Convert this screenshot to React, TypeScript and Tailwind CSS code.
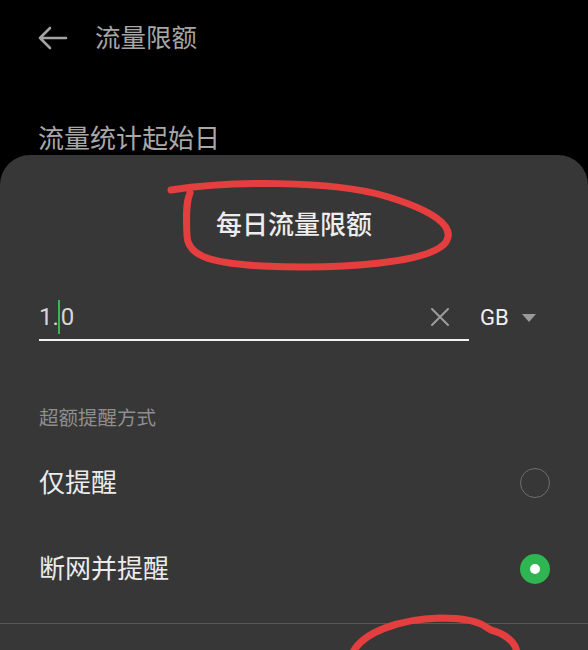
import React from 'react';

const font = { fontFamily: 'Roboto, "Noto Sans CJK SC", sans-serif' };

const Radio: React.FC<{ checked?: boolean }> = ({ checked }) =>
  checked ? (
    <div className="w-[30px] h-[30px] rounded-full bg-[#2fb551] flex items-center justify-center">
      <div className="w-[10px] h-[10px] rounded-full bg-white" />
    </div>
  ) : (
    <div className="w-[30px] h-[30px] rounded-full border-[1.5px] border-[#6e6e6e]" />
  );

// Red marker strokes drawn over the screenshot
const Annotations: React.FC = () => (
  <svg className="absolute inset-0 pointer-events-none" width="588" height="650" viewBox="0 0 588 650">
    <g fill="none" stroke="#e53e3e" strokeWidth="7" strokeLinecap="round" strokeLinejoin="round">
      <path d="M171 190 C 230 181 330 180 385 196 C 432 210 456 226 446 242 C 432 262 345 270 262 266 C 205 263 188 254 187 236 C 186 216 186 202 190 193" />
      <path d="M352 654 C 362 632 400 619 440 618 C 462 618 478 621 486 627 L 491 630 C 502 633 511 639 515 646 L 518 654" />
    </g>
  </svg>
);

export default function App() {
  return (
    <div className="relative w-[588px] h-[650px] bg-black overflow-hidden flex flex-col" style={font}>
      <div className="h-[76px] flex items-center pl-[38px] shrink-0">
        <svg width="30" height="24" viewBox="0 0 30 24" fill="none" stroke="#a3a3a3" strokeWidth="2.6" strokeLinecap="round" strokeLinejoin="round">
          <path d="M2 12 H28 M2 12 L12 2 M2 12 L12 22" />
        </svg>
        <span className="ml-[27px] text-[25.5px] leading-[32px] text-[#a6a6a6]">流量限额</span>
      </div>

      <div className="pt-[47px] pl-[38px] text-[26px] leading-[32px] text-[#a8a8a8] shrink-0">流量统计起始日</div>

      <div className="flex-1 rounded-t-[30px] bg-[#373737] flex flex-col">
        <div className="pt-[56px] text-center text-[26px] leading-[28px] font-medium text-[#ededed]">每日流量限额</div>

        <div className="mt-[55px] pl-[39px] flex items-center">
          <div className="w-[430px] flex items-center border-b-2 border-[#f2f2f2] pt-[6px] pb-[5px] pr-[19px]">
            <div className="flex-1 text-[24px] leading-[32px] text-[#d6d6d6] flex items-center">
              <span>1.</span>
              <span className="inline-block w-[2px] h-[34px] bg-[#3cb356] -ml-[1px] mr-[1px]" />
              <span>0</span>
            </div>
            <svg width="20" height="18" viewBox="0 0 20 18" fill="none" stroke="#9c9c9c" strokeWidth="2" strokeLinecap="round">
              <path d="M2 1 L18 17 M18 1 L2 17" />
            </svg>
          </div>
          <span className="ml-[11px] text-[22px] leading-[32px] text-[#f0f0f0]">GB</span>
          <svg className="ml-[13px]" width="14" height="8" viewBox="0 0 14 8">
            <path d="M0 0 H14 L7 8 Z" fill="#9a9a9a" />
          </svg>
        </div>

        <div className="mt-[65px] pl-[39px] text-[19.5px] leading-[26px] text-[#8e8e8e]">超额提醒方式</div>

        <div className="mt-[8px] h-[86px] pl-[39px] pr-[38px] flex items-center justify-between">
          <span className="text-[26px] leading-[32px] text-[#ebebeb]">仅提醒</span>
          <Radio />
        </div>
        <div className="h-[86px] pl-[39px] pr-[38px] flex items-center justify-between">
          <span className="text-[26px] leading-[32px] text-[#ebebeb]">断网并提醒</span>
          <Radio checked />
        </div>
        <div className="mt-[11px] h-px bg-[#575757]" />
      </div>

      <Annotations />
    </div>
  );
}
